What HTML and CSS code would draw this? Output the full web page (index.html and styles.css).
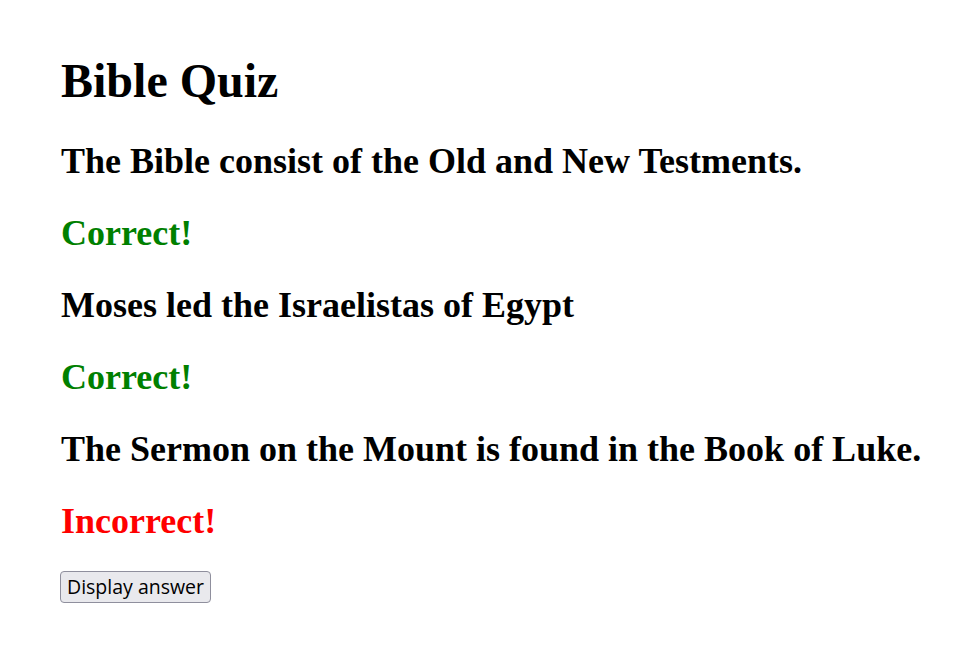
FILE: index.html
```html
<!DOCTYPE html>
<html>
<head>
<meta charset="utf-8">
<link rel="stylesheet" href="styles.css">
</head>
<body>
<div class="page">
  <h1 class="title">Bible Quiz</h1>
  <h2 class="q">The Bible consist of the Old and New Testments.</h2>
  <h2 class="res ok">Correct!</h2>
  <h2 class="q">Moses led the Israelistas of Egypt</h2>
  <h2 class="res ok">Correct!</h2>
  <h2 class="q">The Sermon on the Mount is found in the Book of Luke.</h2>
  <h2 class="res bad">Incorrect!</h2>
  <button class="btn">Display answer</button>
</div>
</body>
</html>
```

FILE: styles.css
```css
html, body {
  margin: 0;
  background: #fff;
}
.page {
  padding: 21px 8px 21px 61px;
  font-family: "Liberation Serif", serif;
  color: #000;
}
.title {
  font-size: 48px;
  font-weight: bold;
  margin: 32px 0;
}
.q, .res {
  font-size: 36px;
  font-weight: bold;
  margin: 30px 0;
}
.ok { color: #008000; }
.bad { color: #ff0000; }
.btn {
  font-family: "Open Sans", sans-serif;
  font-size: 19.5px;
  line-height: 1;
  padding: 0 6px;
  margin: -1px 0 0 -1px;
  background: #e9e9ed;
  border: 1px solid #8f8f9d;
  border-radius: 4px;
  color: #000;
  height: 32px;
}
```
